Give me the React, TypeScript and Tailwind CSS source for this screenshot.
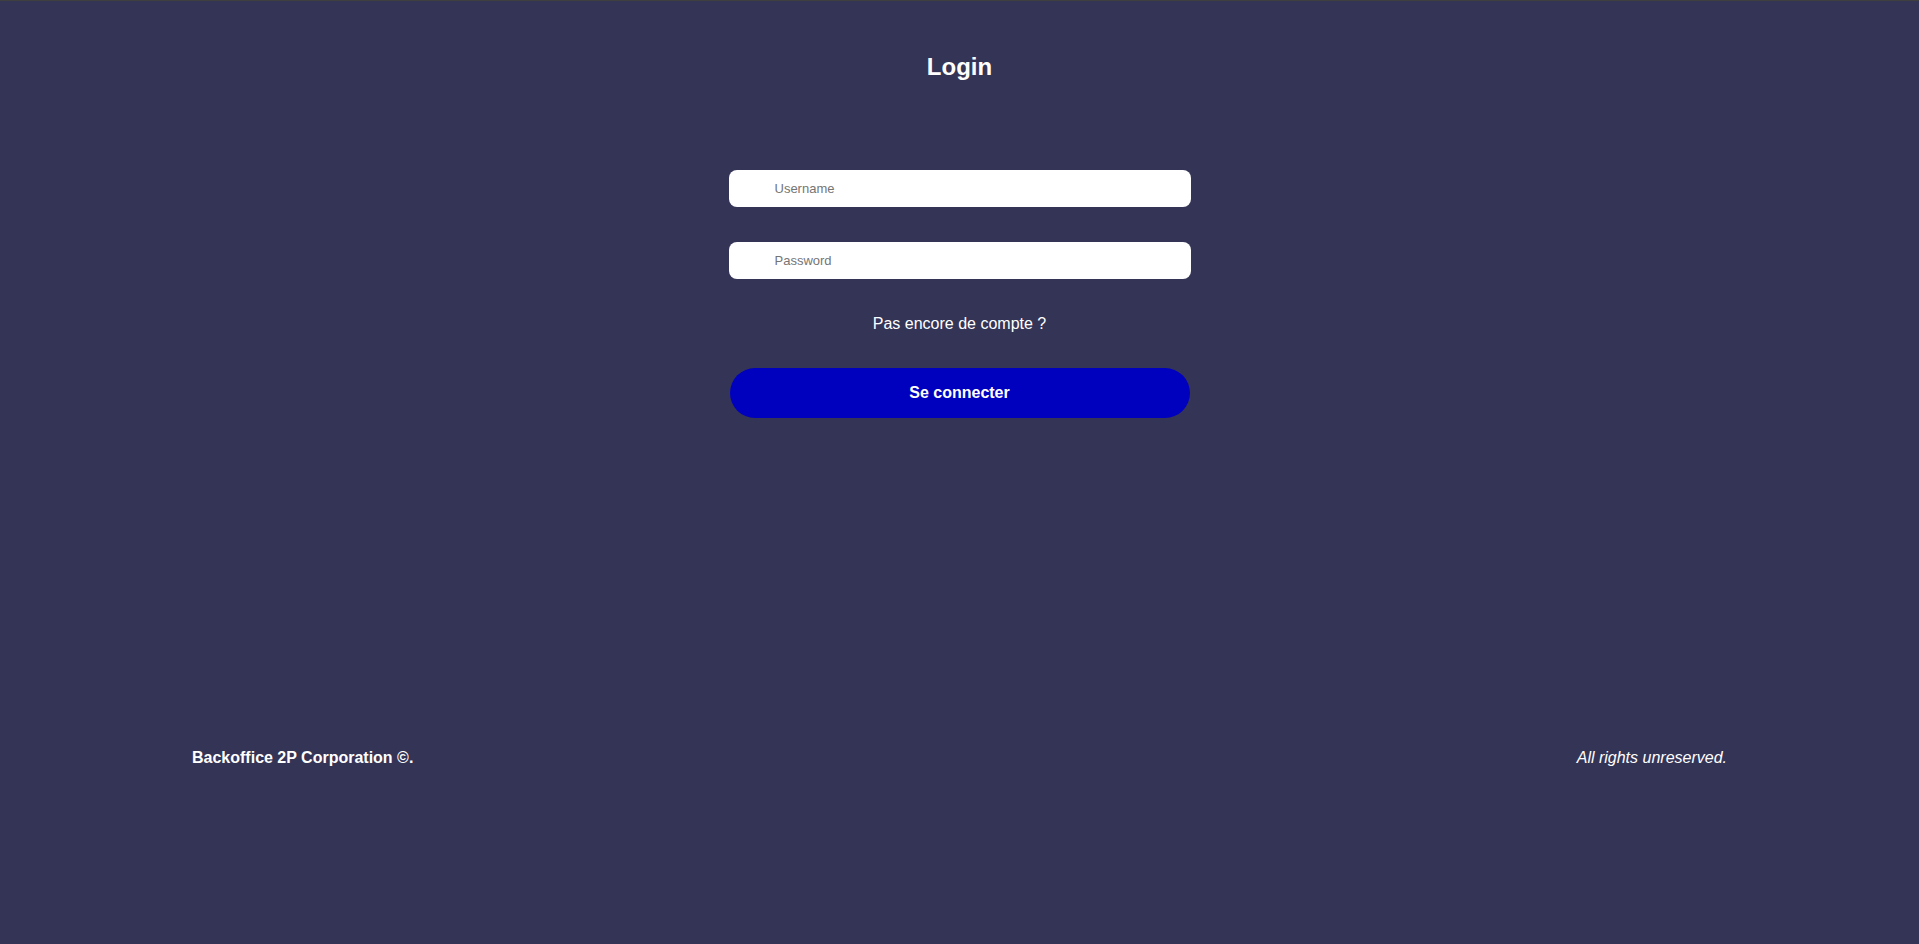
export default function App() {
  return (
    <div
      className="flex min-h-[944px] flex-col border-t border-[#3f3f3f] bg-[#343456] text-white"
      style={{ fontFamily: '"Liberation Sans", Arial, sans-serif' }}
    >
      {/* Header */}
      <h1 className="mt-[52px] text-center text-[24px] font-bold leading-[28px]">Login</h1>

      {/* Form */}
      <form className="mx-auto mt-[89px] flex w-[462px] flex-col items-center">
        <input
          type="text"
          placeholder="Username"
          className="h-[37px] w-full rounded-lg bg-white pl-[46px] text-[13px] text-black outline-none placeholder:text-[#757575]"
        />
        <input
          type="password"
          placeholder="Password"
          className="mt-[35px] h-[37px] w-full rounded-lg bg-white pl-[46px] text-[13px] text-black outline-none placeholder:text-[#757575]"
        />
        <a href="#" className="mt-[36px] text-[16px] leading-[18px] text-white">
          Pas encore de compte ?
        </a>
        <button
          type="button"
          className="mt-[35px] h-[50px] w-[460px] rounded-full bg-[#0000bf] text-[16px] font-bold text-white"
        >
          Se connecter
        </button>
      </form>

      {/* Footer */}
      <footer className="mt-[331px] flex items-center justify-between px-[192px] text-[16px] leading-[18px]">
        <span className="font-bold">Backoffice 2P Corporation ©.</span>
        <span className="italic">All rights unreserved.</span>
      </footer>
    </div>
  )
}
